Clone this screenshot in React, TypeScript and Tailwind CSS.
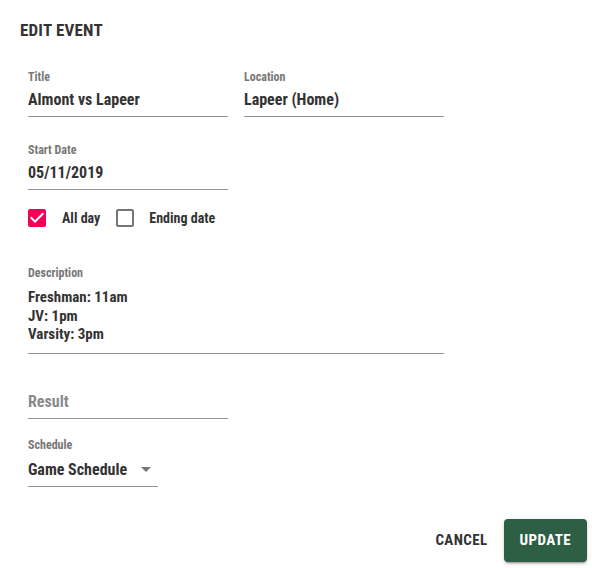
import React from "react";

const FONT = {
  fontFamily:
    '"Roboto Condensed", "Liberation Sans Narrow", "DejaVu Sans Condensed", sans-serif',
};

function Field({
  label,
  value,
  width,
}: {
  label: string;
  value: string;
  width: string;
}) {
  return (
    <div className={`flex flex-col ${width}`}>
      <div className="mt-[3px] text-[12px] leading-[12px] font-bold text-[#777777]">{label}</div>
      <div className="mt-[1px] pt-[6px] pb-[7px] text-[16px] leading-[19px] font-bold text-[#333333] border-b border-[#949494]">
        {value}
      </div>
    </div>
  );
}

function CheckedBox() {
  return (
    <svg width="24" height="24" viewBox="0 0 24 24" className="text-[#f50057]">
      <path
        fill="currentColor"
        d="M19 3H5c-1.11 0-2 .9-2 2v14c0 1.1.89 2 2 2h14c1.11 0 2-.9 2-2V5c0-1.1-.89-2-2-2zm-9 14l-5-5 1.41-1.41L10 14.17l7.59-7.59L19 8l-9 9z"
      />
    </svg>
  );
}

function EmptyBox() {
  return (
    <svg width="24" height="24" viewBox="0 0 24 24" className="text-[#757575]">
      <path
        fill="currentColor"
        d="M19 5v14H5V5h14m0-2H5c-1.1 0-2 .9-2 2v14c0 1.1.9 2 2 2h14c1.1 0 2-.9 2-2V5c0-1.1-.9-2-2-2z"
      />
    </svg>
  );
}

export default function App() {
  return (
    <div className="w-[592px] h-[568px] bg-white flex flex-col" style={FONT}>
      <div className="pl-[20px] pt-[18px] text-[17px] leading-[24px] font-bold text-[#333333] tracking-[0.2px]">
        EDIT EVENT
      </div>

      <div className="flex flex-col px-[28px] mt-[26px]">
        <div className="flex gap-[16px]">
          <Field label="Title" value="Almont vs Lapeer" width="w-[200px]" />
          <Field label="Location" value="Lapeer (Home)" width="w-[200px]" />
        </div>

        <div className="mt-[24px]">
          <Field label="Start Date" value="05/11/2019" width="w-[200px]" />
        </div>

        <div className="flex items-center mt-[7px] -ml-[3px] h-[42px]">
          <CheckedBox />
          <span className="ml-[13px] text-[14px] font-bold text-[#333333]">All day</span>
          <span className="ml-[13px]">
            <EmptyBox />
          </span>
          <span className="ml-[12px] text-[14px] font-bold text-[#333333]">Ending date</span>
        </div>

        <div className="mt-[28px] flex flex-col w-[416px]">
          <div className="text-[12px] leading-[12px] font-bold text-[#777777]">Description</div>
          <div className="mt-[4px] pt-[5px] pb-[9px] text-[15px] leading-[18.5px] font-bold text-[#333333] border-b border-[#949494]">
            <div>Freshman: 11am</div>
            <div>JV: 1pm</div>
            <div>Varsity: 3pm</div>
          </div>
        </div>

        <div className="mt-[16px] flex flex-col w-[200px]">
          <div className="mt-[16px] pt-[6px] pb-[7px] text-[16px] leading-[19px] font-bold text-[#8a8a8a] border-b border-[#949494]">
            Result
          </div>
        </div>

        <div className="mt-[19px] flex flex-col w-[130px]">
          <div className="mt-[1px] text-[12px] leading-[12px] font-bold text-[#777777]">Schedule</div>
          <div className="mt-[3px] pt-[6px] pb-[7px] flex items-center text-[16px] leading-[19px] font-bold text-[#333333] border-b border-[#949494]">
            <span>Game Schedule</span>
            <svg width="24" height="24" viewBox="0 0 24 24" className="ml-auto -my-[3px] text-[#757575]">
              <path fill="currentColor" d="M7 10l5 5 5-5z" />
            </svg>
          </div>
        </div>
      </div>

      <div className="mt-auto mb-[6px] flex justify-end items-center pr-[5px] gap-[8px]">
        <button className="px-[8px] h-[36px] text-[15px] font-bold text-[#333333] tracking-[0.4px]">
          CANCEL
        </button>
        <button className="h-[43px] px-[16px] rounded-[4px] bg-[#2e5e43] text-white text-[15px] font-bold tracking-[0.4px] shadow-[0_3px_1px_-2px_rgba(0,0,0,0.2),0_2px_2px_0_rgba(0,0,0,0.14),0_1px_5px_0_rgba(0,0,0,0.12)]">
          UPDATE
        </button>
      </div>
    </div>
  );
}
